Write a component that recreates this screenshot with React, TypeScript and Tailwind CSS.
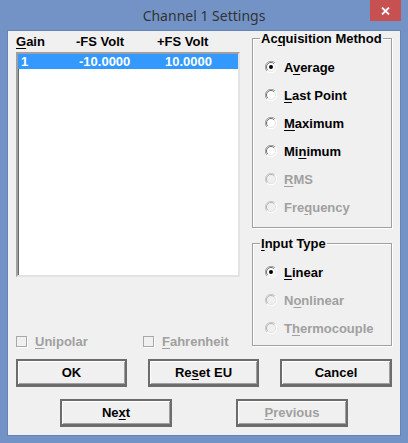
import React from 'react';

const ui = "font-['Liberation_Sans',Arial,sans-serif] font-bold text-[13px] leading-[15px]";

function Key({ text, at }: { text: string; at: number }) {
  return (
    <>
      {text.slice(0, at)}
      <span className="underline underline-offset-[2px]">{text[at]}</span>
      {text.slice(at + 1)}
    </>
  );
}

function RadioMark({ checked, disabled }: { checked?: boolean; disabled?: boolean }) {
  return (
    <svg width="12" height="12" viewBox="0 0 12 12" className="shrink-0">
      <circle cx="6" cy="6" r="5.5" fill={disabled ? '#f0f0f0' : '#ffffff'} />
      <path d="M1.9 10.1 A5.8 5.8 0 0 1 10.1 1.9" fill="none" stroke={disabled ? '#c8c8c8' : '#a0a0a0'} strokeWidth="1" />
      <path d="M10.1 1.9 A5.8 5.8 0 0 1 1.9 10.1" fill="none" stroke="#ffffff" strokeWidth="1" />
      <path d="M2.8 9.2 A4.5 4.5 0 0 1 9.2 2.8" fill="none" stroke={disabled ? '#b4b4b4' : '#6a6a6a'} strokeWidth="1" />
      <path d="M9.2 2.8 A4.5 4.5 0 0 1 2.8 9.2" fill="none" stroke="#e3e3e3" strokeWidth="1" />
      {checked && <circle cx="6" cy="6" r="2" fill="#000000" />}
    </svg>
  );
}

function Radio({ label, at, checked, disabled }: { label: string; at: number; checked?: boolean; disabled?: boolean }) {
  return (
    <div className="h-[28px] flex items-center gap-[7px]">
      <RadioMark checked={checked} disabled={disabled} />
      <span className={disabled ? 'text-[#a0a0a0]' : 'text-black'}>
        <Key text={label} at={at} />
      </span>
    </div>
  );
}

function Check({ label, at }: { label: string; at: number }) {
  return (
    <div className="flex items-center gap-[8px] text-[#a0a0a0]">
      <span className="w-[11px] h-[11px] border border-[#a8a8a8] bg-[#f0f0f0] shadow-[1px_1px_0_#fff]" />
      <span>
        <Key text={label} at={at} />
      </span>
    </div>
  );
}

function Btn({ children, w, disabled }: { children: React.ReactNode; w: string; disabled?: boolean }) {
  return (
    <button
      className={`${w} h-[28px] bg-[#f0f0f0] border-2 border-[#6c6c6c] border-b-[3px] border-r-[2px] shadow-[inset_1px_1px_0_#ffffff,inset_-1px_-1px_0_#a0a0a0] flex items-center justify-center ${
        disabled ? 'text-[#a0a0a0]' : 'text-black'
      }`}
    >
      {children}
    </button>
  );
}

export default function App() {
  return (
    <div className="w-[408px] h-[443px] bg-[#7393c6] flex flex-col">
      {/* title bar */}
      <div className="relative h-[31px] flex items-center justify-center">
        <span className="font-['Noto_Sans',sans-serif] text-[14px] text-[#333333] pb-[1px]">Channel 1 Settings</span>
        <div className="absolute top-0 right-[7px] w-[31px] h-[21px] bg-[#c75050] flex items-center justify-center">
          <svg width="9" height="8" viewBox="0 0 9 8">
            <path d="M1 0.5 L8 7.5 M8 0.5 L1 7.5" stroke="#ffffff" strokeWidth="1.8" />
          </svg>
        </div>
      </div>

      {/* client area */}
      <div className={`mx-[8px] h-[404px] bg-[#f0f0f0] shadow-[0_0_0_1px_#6583b6] ${ui}`}>
        <div className="flex h-[318px]">
          {/* left column */}
          <div className="ml-[8px] w-[224px] flex flex-col">
            <div className="h-[21px] flex items-center relative pt-[1px]">
              <span className="w-[60px]">
                <Key text="Gain" at={0} />
              </span>
              <span className="w-[81px]">-FS Volt</span>
              <span>+FS Volt</span>
            </div>
            <div className="h-[226px] bg-white border-2 border-t-[#a0a0a0] border-l-[#a0a0a0] border-b-[#e3e3e3] border-r-[#e3e3e3] shadow-[inset_1px_1px_0_#696969] pt-0">
              <div className="h-[15px] bg-[#3399ff] text-white flex items-center">
                <span className="w-[61px] pl-[3px]">1</span>
                <span className="w-[86px]">-10.0000</span>
                <span>10.0000</span>
              </div>
            </div>
            <div className="mt-[57px] flex items-center">
              <div className="w-[127px]">
                <Check label="Unipolar" at={0} />
              </div>
              <Check label="Fahrenheit" at={0} />
            </div>
          </div>

          {/* right column */}
          <div className="ml-[12px] w-[140px] flex flex-col">
            <fieldset className="min-w-0 h-[197px] border border-[#a0a0a0] shadow-[1px_1px_0_#fff,inset_1px_1px_0_#fff] pl-[12px] pt-[7px]">
              <legend className="-ml-[5px] px-[1px] whitespace-nowrap">
                Ac<span className="underline underline-offset-[2px]">q</span>uisition Method
              </legend>
              <Radio label="Average" at={1} checked />
              <Radio label="Last Point" at={0} />
              <Radio label="Maximum" at={0} />
              <Radio label="Minimum" at={2} />
              <Radio label="RMS" at={0} disabled />
              <Radio label="Frequency" at={3} disabled />
            </fieldset>
            <fieldset className="min-w-0 mt-[8px] h-[110px] border border-[#a0a0a0] shadow-[1px_1px_0_#fff,inset_1px_1px_0_#fff] pl-[12px] pt-[7px]">
              <legend className="-ml-[5px] px-[1px] whitespace-nowrap">
                <Key text="Input Type" at={0} />
              </legend>
              <Radio label="Linear" at={0} checked />
              <Radio label="Nonlinear" at={1} disabled />
              <Radio label="Thermocouple" at={1} disabled />
            </fieldset>
          </div>
        </div>

        {/* buttons */}
        <div className="mt-[10px] ml-[8px] flex gap-[21px]">
          <Btn w="w-[111px]">OK</Btn>
          <Btn w="w-[111px]">
            <Key text="Reset EU" at={2} />
          </Btn>
          <Btn w="w-[112px]">Cancel</Btn>
        </div>
        <div className="mt-[12px] ml-[52px] flex gap-[64px]">
          <Btn w="w-[112px]">
            <Key text="Next" at={2} />
          </Btn>
          <Btn w="w-[112px]" disabled>
            <Key text="Previous" at={0} />
          </Btn>
        </div>
      </div>
    </div>
  );
}
